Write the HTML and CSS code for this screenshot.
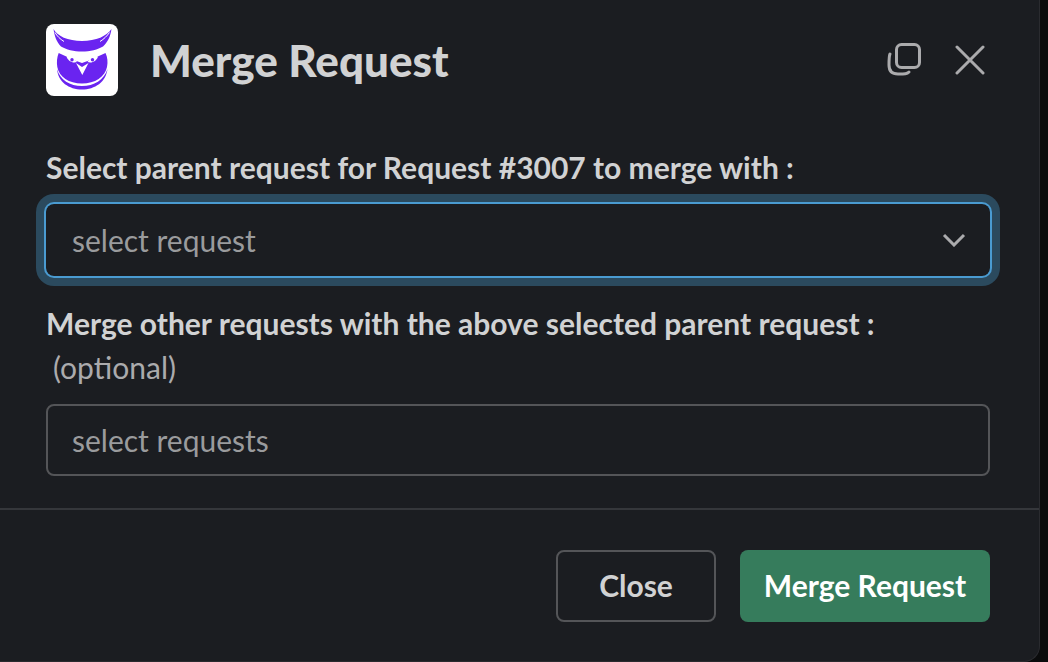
FILE: index.html
```html
<!DOCTYPE html>
<html lang="en">
<head>
<meta charset="utf-8">
<title>Merge Request</title>
<link rel="stylesheet" href="styles.css">
</head>
<body>
<div class="modal">
  <header class="head">
    <div class="logo">
      <svg width="72" height="72" viewBox="0 0 72 72">
        <path class="owl" d="M7.500 5C11 12 22 17 36 17C50 17 61 12 65.500 5C64.500 12 62 18 57 22.500C52 25.500 44 27.500 36 27.500C28 27.500 20 25.500 15 22.500C10.500 18 8.500 12 7.500 5Z"/>
        <path class="stripe" d="M9 8.500C11 12 14 15 18 17.500M63.500 8.500C61 12 58 15 54 17.500"/>
        <path class="owl" d="M12.700 29L29 36.500L36 39L43 36.500L59.500 29C61.500 33 62 38 61 43C59 53 49 59.500 36 59.500C23 59.500 13 53 11.300 43C10.500 38 11 33 12.700 29Z"/>
        <path class="owl" d="M11 45C14 56 24 62 36 62C48 62 58 56 61.500 45C60 58 49 65.500 36 65.500C23 65.500 12 58 11 45Z"/>
        <path class="eye" d="M20.500 32.500C24 32 29 35 31 38C27 39.500 22 37.500 20.500 32.500Z"/>
        <path class="eye" d="M52 32.500C48.500 32 43.500 35 41.500 38C45.500 39.500 50.500 37.500 52 32.500Z"/>
        <circle class="owl" cx="26" cy="35.800" r="1.700"/>
        <circle class="owl" cx="46.500" cy="35.800" r="1.700"/>
        <path class="eye" d="M30 39L36 43L42.500 39L36.300 51Z"/>
      </svg>
    </div>
    <h1 class="title">Merge Request</h1>
    <div class="head-actions">
      <svg class="icon" width="34" height="34" viewBox="0 0 34 34">
        <rect x="9.500" y="1.500" width="23" height="23" rx="5"/>
        <path d="M3 11C2 13 2 15 2 22C2 28 5 31 11 31C18 31 20 31 22 29"/>
      </svg>
      <svg class="icon" width="30" height="30" viewBox="0 0 30 30">
        <path d="M2 2L28 28M28 2L2 28"/>
      </svg>
    </div>
  </header>
  <section class="body">
    <label class="label">Select parent request for Request #3007 to merge with :</label>
    <div class="field field-focus">
      <span>select request</span>
      <svg class="chevron" width="24" height="14" viewBox="0 0 24 14"><path d="M2 2L12 12L22 2"/></svg>
    </div>
    <label class="label label-second">Merge other requests with the above selected parent request :</label>
    <div class="optional">(optional)</div>
    <div class="field">
      <span>select requests</span>
    </div>
  </section>
  <footer class="foot">
    <button class="btn btn-close">Close</button>
    <button class="btn btn-merge">Merge Request</button>
  </footer>
</div>
</body>
</html>
```

FILE: styles.css
```css
* { box-sizing: border-box; }
html, body { margin: 0; height: 100%; }
body {
  background: #0a0b0c;
  font-family: Lato, "Liberation Sans", sans-serif;
  overflow: hidden;
}
.modal {
  width: 1040px;
  height: 662px;
  background: #1b1d21;
  border-right: 1px solid #2a2b2f;
  border-bottom: 1px solid #2a2b2f;
  border-radius: 0 0 16px 0;
  display: flex;
  flex-direction: column;
}
.head {
  display: flex;
  align-items: center;
  height: 120px;
  padding: 0 54px 0 46px;
}
.logo {
  width: 72px;
  height: 72px;
  background: #fff;
  border-radius: 8px;
  display: flex;
}
.owl { fill: #6a24f0; }
.eye { fill: #fff; }
.stripe { fill: none; stroke: #fff; stroke-width: 1; }
.title {
  margin: 0 0 0 32px;
  font-size: 44px;
  font-weight: 900;
  color: #d1d2d3;
  flex: 1;
}
.head-actions {
  display: flex;
  align-items: center;
  gap: 34px;
}
.icon {
  fill: none;
  stroke: #ababad;
  stroke-width: 3;
  stroke-linecap: round;
}
.body {
  padding: 27px 49px 0 46px;
  display: flex;
  flex-direction: column;
}
.label {
  font-size: 30px;
  font-weight: 700;
  line-height: 40px;
  color: #d1d2d3;
}
.label-second { margin-top: 27px; }
.optional {
  font-size: 30px;
  line-height: 48px;
  color: #ababad;
  padding-left: 7px;
  margin-bottom: 13px;
}
.field {
  height: 72px;
  border: 2px solid #545558;
  border-radius: 8px;
  padding: 0 22px 0 24px;
  display: flex;
  align-items: center;
  justify-content: space-between;
  font-size: 30px;
  color: #9a9b9d;
}
.field-focus {
  margin-top: 17px;
  border-color: transparent;
  box-shadow: 0 0 0 2px #4a9bd1, 0 0 0 10px #2b4a5e;
}
.chevron {
  fill: none;
  stroke: #ababad;
  stroke-width: 3;
}
.foot {
  margin-top: 32px;
  border-top: 2px solid #35373b;
  padding: 40px 49px 0 0;
  display: flex;
  justify-content: flex-end;
  gap: 24px;
}
.btn {
  height: 72px;
  border-radius: 8px;
  font-family: inherit;
  font-size: 30px;
  font-weight: 700;
  padding: 0 0 2px;
}
.btn-close {
  width: 160px;
  background: transparent;
  border: 2px solid #545558;
  color: #d1d2d3;
}
.btn-merge {
  width: 250px;
  background: #367c5c;
  border: 0;
  color: #fff;
}
```
